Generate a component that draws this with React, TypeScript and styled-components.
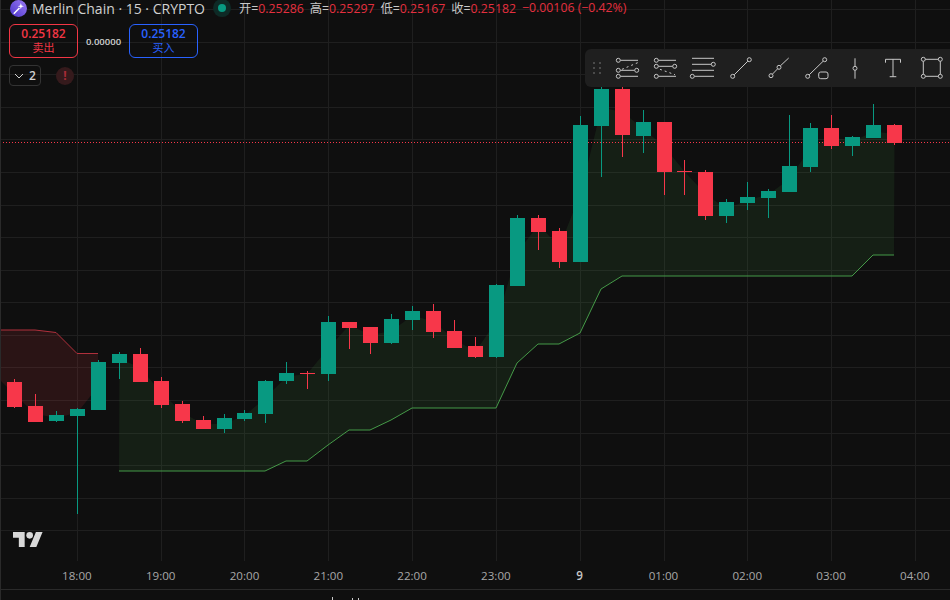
import React from 'react';
import styled, { createGlobalStyle } from 'styled-components';

const RED = '#f7374a';
const GREEN = '#089981';
const WIDTH = 950;
const PLOT_HEIGHT = 561;

// top of body, bottom of body, wick high, wick low, up candle
type Candle = [number, number, number, number, boolean];

const candles: Candle[] = [
  [382, 407, 379, 408, false], [406, 422, 394, 422, false], [415, 421, 411, 422, true], [409, 416, 408, 514, true],
  [362, 410, 360, 410, true], [354, 363, 352, 379, true], [354, 382, 348, 382, false], [381, 405, 377, 408, false],
  [404, 421, 401, 423, false], [420, 429, 416, 429, false], [418, 429, 414, 433, true], [413, 419, 410, 421, true],
  [381, 414, 380, 423, true], [373, 381, 362, 384, true], [373, 374, 371, 389, false], [322, 374, 316, 381, true],
  [322, 328, 322, 349, false], [327, 343, 327, 354, false], [319, 343, 314, 344, true], [311, 320, 306, 330, true],
  [311, 332, 304, 338, false], [331, 348, 320, 348, false], [346, 357, 337, 358, false], [285, 357, 284, 358, true],
  [218, 286, 215, 286, true], [218, 232, 215, 250, false], [231, 262, 228, 268, false], [125, 262, 116, 262, true],
  [89, 126, 87, 177, true], [89, 135, 87, 157, false], [122, 136, 110, 153, true], [122, 172, 122, 195, false],
  [171, 172, 160, 195, false], [172, 216, 170, 220, false], [202, 216, 199, 223, true], [197, 203, 182, 210, true],
  [191, 198, 189, 218, true], [166, 192, 115, 192, true], [128, 167, 123, 172, true], [128, 146, 115, 149, false],
  [137, 146, 136, 156, true], [125, 138, 104, 138, true], [125, 143, 124, 145, false],
];

const candleLeft = (i: number) => 7 + 21 * i - (i >= 11 ? 1 : 0) - (i >= 32 ? 1 : 0);
const candleCenter = (i: number) => candleLeft(i) + 7.5;
const candleMid = (i: number) => (candles[i][0] + candles[i][1]) / 2;

const redLine: [number, number][] = [[0, 330], [35, 330], [56, 332.5], [77, 353.5], [98, 353.5]];
const greenLine: [number, number][] = [
  [119, 471], [265, 471], [286, 461], [307, 461], [328, 445], [349, 430], [370, 430], [391, 420], [412, 408],
  [496, 408], [517, 363], [538, 344], [559, 344], [580, 333], [601, 289], [622, 276], [852, 276], [873, 255], [894, 255],
];

const toPath = (pts: [number, number][]) => pts.map(([x, y], i) => `${i ? 'L' : 'M'}${x} ${y}`).join(' ');

const midsBetween = (from: number, to: number) => {
  const pts: [number, number][] = [];
  for (let i = to; i >= from; i--) pts.push([candleCenter(i), candleMid(i)]);
  return pts;
};

const redFill = toPath([...redLine, ...midsBetween(0, 4), [0, 380]]) + ' Z';
const greenFill = toPath([...greenLine, ...midsBetween(5, 42)]) + ' Z';

const hGrid = [9, 42, 74, 107, 139, 172, 205, 237, 270, 302, 335, 367, 400, 433, 465, 498, 530];
const vGrid = [77, 161, 244, 328, 412, 496, 580, 664, 747, 831, 915];
const ticks = ['18:00', '19:00', '20:00', '21:00', '22:00', '23:00', '9', '01:00', '02:00', '03:00', '04:00'];

const App = () => (
  <Page>
    <GlobalStyle />
    <Plot>
      <ChartSvg width={WIDTH} height={PLOT_HEIGHT} viewBox={`0 0 ${WIDTH} ${PLOT_HEIGHT}`}>
        {hGrid.map(y => <rect key={y} x={0} y={y} width={WIDTH} height={1} fill="#1f1f1f" />)}
        {vGrid.map(x => <rect key={x} x={x} y={0} width={1} height={PLOT_HEIGHT} fill="#1f1f1f" />)}
        <path d={redFill} fill="#f23645" fillOpacity={0.12} />
        <path d={greenFill} fill="#4caf50" fillOpacity={0.1} />
        <path d={toPath(redLine)} fill="none" stroke="#b0303c" />
        <path d={toPath(greenLine)} fill="none" stroke="#459a48" />
        <line x1={0} x2={WIDTH} y1={142.5} y2={142.5} stroke={RED} strokeDasharray="1 2" />
        {candles.map(([top, bottom, high, low, up], i) => (
          <g key={i} fill={up ? GREEN : RED} shapeRendering="crispEdges">
            <rect x={candleLeft(i) + 7} y={high} width={1} height={low - high} />
            <rect x={candleLeft(i)} y={top} width={15} height={bottom - top} />
          </g>
        ))}
      </ChartSvg>

      <Legend>
        <TitleRow>
          <SymbolLogo viewBox="0 0 18 18">
            <defs>
              <linearGradient id="merlin" x1="0" y1="1" x2="1" y2="0">
                <stop offset="0" stopColor="#4b35c9" />
                <stop offset="1" stopColor="#9c7bf5" />
              </linearGradient>
            </defs>
            <circle cx="9" cy="9" r="9" fill="url(#merlin)" />
            <path d="M4 14.5 10 8.5" stroke="#fff" strokeWidth="1.6" />
            <path d="M11.5 3.2l.8 2.5 2.5.8-2.5.8-.8 2.5-.8-2.5-2.5-.8 2.5-.8z" fill="#fff" />
          </SymbolLogo>
          <Title>Merlin Chain · 15 · CRYPTO</Title>
          <StatusDot />
          <Ohlc>
            <OhlcItem>开=<Value>0.25286</Value></OhlcItem>
            <OhlcItem>高=<Value>0.25297</Value></OhlcItem>
            <OhlcItem>低=<Value>0.25167</Value></OhlcItem>
            <OhlcItem>收=<Value>0.25182</Value></OhlcItem>
            <Value>−0.00106 (−0.42%)</Value>
          </Ohlc>
        </TitleRow>
        <TradeRow>
          <TradeButton $color="#f23645">
            <strong>0.25182</strong>
            <span>卖出</span>
          </TradeButton>
          <Spread>0.00000</Spread>
          <TradeButton $color="#2962ff">
            <strong>0.25182</strong>
            <span>买入</span>
          </TradeButton>
        </TradeRow>
        <IndicatorRow>
          <CollapseBadge>
            <svg width="10" height="6" viewBox="0 0 10 6">
              <path d="M1 1l4 4 4-4" fill="none" stroke="#d1d1d1" />
            </svg>
            2
          </CollapseBadge>
          <ErrorBadge>!</ErrorBadge>
        </IndicatorRow>
      </Legend>

      <Toolbar>
        <DragHandle>
          {Array.from({ length: 6 }, (_, i) => <i key={i} />)}
        </DragHandle>
        <ToolButton>
          <ToolIcon>
            <circle cx="5.3" cy="6.3" r="2" /><circle cx="5.3" cy="16.3" r="2" /><circle cx="5.3" cy="22.3" r="2" /><circle cx="23.7" cy="16.3" r="2" />
            <path d="M7.5 6.3H25M7.5 16.3H21.5M7.5 22.3H25" />
            <path d="M9 15.3 24.7 8.7" strokeDasharray="2 3" />
          </ToolIcon>
        </ToolButton>
        <ToolButton>
          <ToolIcon>
            <circle cx="5.3" cy="6.3" r="2" /><circle cx="5.3" cy="12.3" r="2" /><circle cx="23.7" cy="12.3" r="2" /><circle cx="5.3" cy="22.3" r="2" />
            <path d="M7.5 6.3H25M7.5 12.3H21.5M7.5 22.3H25" />
            <path d="M9 15.3 24 20.7" strokeDasharray="2 3" />
          </ToolIcon>
        </ToolButton>
        <ToolButton>
          <ToolIcon>
            <circle cx="24.3" cy="10.3" r="2" /><circle cx="3.3" cy="22.3" r="2" />
            <path d="M3 4.3H25M3 10.3H22M3 16.3H25M5.5 22.3H25" />
          </ToolIcon>
        </ToolButton>
        <ToolButton>
          <ToolIcon>
            <circle cx="5.7" cy="22.3" r="2" /><circle cx="22.3" cy="5.7" r="2" />
            <path d="M7.2 20.8 20.8 7.2" />
          </ToolIcon>
        </ToolButton>
        <ToolButton>
          <ToolIcon>
            <circle cx="6" cy="21.7" r="2" /><circle cx="14" cy="13.3" r="2" />
            <path d="M7.4 20.2 12.6 14.8M15.4 11.8 23.7 4" />
          </ToolIcon>
        </ToolButton>
        <ToolButton>
          <ToolIcon>
            <circle cx="4.7" cy="22.3" r="2" /><circle cx="21.7" cy="5.7" r="2" />
            <path d="M6.2 20.8 20.2 7.2" />
            <rect x="15.7" y="18" width="9.3" height="6.7" rx="2" />
          </ToolIcon>
        </ToolButton>
        <ToolButton>
          <ToolIcon>
            <circle cx="14" cy="14.3" r="2" />
            <path d="M14 4.3V12.3M14 16.3V24.7" />
          </ToolIcon>
        </ToolButton>
        <ToolButton>
          <ToolIcon>
            <path d="M6.5 8.7V5.3H21.5V8.7M14 5.3V22.7M10.7 22.7H17.3" />
          </ToolIcon>
        </ToolButton>
        <ToolButton>
          <ToolIcon>
            <circle cx="6.3" cy="5.3" r="2" /><circle cx="23.3" cy="5.3" r="2" /><circle cx="6.3" cy="22.3" r="2" /><circle cx="23.3" cy="22.3" r="2" />
            <path d="M8.3 5.3H21.3M8.3 22.3H21.3M6.3 7.3V20.3M23.3 7.3V20.3" />
          </ToolIcon>
        </ToolButton>
      </Toolbar>

      <Watermark viewBox="0 4 36 18">
        <path d="M14 22H7V11H0V4h14v18zM28 22h-8l7.5-18h8L28 22z" />
        <circle cx="20" cy="8" r="4" />
      </Watermark>
    </Plot>

    <TimeAxis>
      {ticks.map(t => <Tick key={t} $strong={t === '9'}>{t}</Tick>)}
    </TimeAxis>

    <BottomStrip>
      <svg width="30" height="10" viewBox="0 0 30 10">
        <path d="M0.5 7V10M20.5 8V10M26.5 8V10" stroke="#c8c8c8" fill="none" />
      </svg>
    </BottomStrip>
  </Page>
);

const GlobalStyle = createGlobalStyle`
  html, body {
    margin: 0;
    background: #0f0f0f;
    overflow: hidden;
  }
`;

const Page = styled.div`
  width: ${WIDTH}px;
  height: 600px;
  display: flex;
  flex-direction: column;
  overflow: hidden;
  background: #0f0f0f;
  border-left: 1px solid #2a2a2a;
  box-sizing: border-box;
  font-family: "Open Sans", "Noto Sans CJK SC", sans-serif;
`;

const Plot = styled.div`
  position: relative;
  height: ${PLOT_HEIGHT}px;
  margin-left: -1px;
  flex: none;
`;

const ChartSvg = styled.svg`
  display: block;
`;

const Legend = styled.div`
  position: absolute;
  top: 0;
  left: 10px;
  display: flex;
  flex-direction: column;
  align-items: flex-start;
`;

const TitleRow = styled.div`
  display: flex;
  align-items: center;
  height: 16px;
  white-space: nowrap;
`;

const SymbolLogo = styled.svg`
  width: 17px;
  height: 17px;
  flex: none;
`;

const Title = styled.span`
  margin-left: 5px;
  font-size: 14px;
  color: #d1d1d1;
`;

const StatusDot = styled.span`
  width: 8px;
  height: 8px;
  margin-left: 13px;
  border-radius: 50%;
  background: ${GREEN};
  box-shadow: 0 0 0 5px #0e2a26;
  flex: none;
`;

const Ohlc = styled.div`
  display: flex;
  gap: 6px;
  margin-left: 13px;
  font-size: 12.3px;
  color: #c8c8c8;
`;

const OhlcItem = styled.span``;

const Value = styled.span`
  color: #e5303f;
`;

const TradeRow = styled.div`
  display: flex;
  align-items: center;
  margin-top: 8px;
  margin-left: -1px;
  gap: 7px;
`;

const TradeButton = styled.div<{ $color: string }>`
  width: 69px;
  height: 34px;
  box-sizing: border-box;
  border: 1px solid ${({ $color }) => $color};
  border-radius: 6px;
  display: flex;
  flex-direction: column;
  align-items: center;
  justify-content: center;
  color: ${({ $color }) => $color};
  line-height: 14px;

  strong {
    font-size: 12px;
    font-weight: 600;
  }

  span {
    font-size: 11px;
  }
`;

const Spread = styled.span`
  font-size: 9.5px;
  font-weight: 600;
  color: #d1d1d1;
  width: 37px;
  text-align: center;
`;

const IndicatorRow = styled.div`
  display: flex;
  align-items: center;
  margin-top: 7px;
  margin-left: -1px;
  gap: 15px;
`;

const CollapseBadge = styled.div`
  width: 32px;
  height: 21px;
  box-sizing: border-box;
  border: 1px solid #333;
  border-radius: 4px;
  display: flex;
  align-items: center;
  justify-content: center;
  gap: 5px;
  font-size: 12px;
  font-weight: 600;
  color: #d1d1d1;
`;

const ErrorBadge = styled.div`
  width: 18px;
  height: 18px;
  border-radius: 50%;
  background: #351a1c;
  color: #a82c38;
  display: flex;
  align-items: center;
  justify-content: center;
  font-size: 12px;
  font-weight: 700;
`;

const Toolbar = styled.div`
  position: absolute;
  top: 49px;
  left: 585px;
  height: 38px;
  width: 400px;
  display: flex;
  align-items: center;
  background: #1f1f1f;
  border-radius: 6px;
`;

const DragHandle = styled.div`
  width: 23px;
  flex: none;
  box-sizing: border-box;
  padding-left: 8px;
  display: grid;
  grid-template-columns: 2px 2px;
  grid-auto-rows: 2px;
  column-gap: 4px;
  row-gap: 3px;

  i {
    background: #4a4a4a;
  }
`;

const ToolButton = styled.div`
  width: 38px;
  height: 38px;
  flex: none;
  display: flex;
  align-items: center;
  justify-content: center;
`;

const ToolIcon = styled.svg.attrs({ viewBox: '0 0 28 28', width: 28, height: 28 })`
  fill: none;
  stroke: #c8c8c8;
  stroke-width: 1;
`;

const Watermark = styled.svg`
  position: absolute;
  left: 13px;
  top: 532px;
  width: 30px;
  height: 15px;
  fill: #d9d9d9;
`;

const TimeAxis = styled.div`
  height: 28px;
  flex: none;
  display: flex;
  align-items: center;
  padding-left: 34px;
`;

const Tick = styled.span<{ $strong: boolean }>`
  flex: none;
  width: 83.8px;
  text-align: center;
  font-size: 11.6px;
  color: ${({ $strong }) => ($strong ? '#c8c8c8' : '#a8a8a8')};
  font-weight: ${({ $strong }) => ($strong ? 600 : 400)};
`;

const BottomStrip = styled.div`
  flex: 1;
  border-top: 1px solid #2a2a2a;
  padding-left: 331px;
  overflow: hidden;

  svg {
    display: block;
  }
`;

export default App;
